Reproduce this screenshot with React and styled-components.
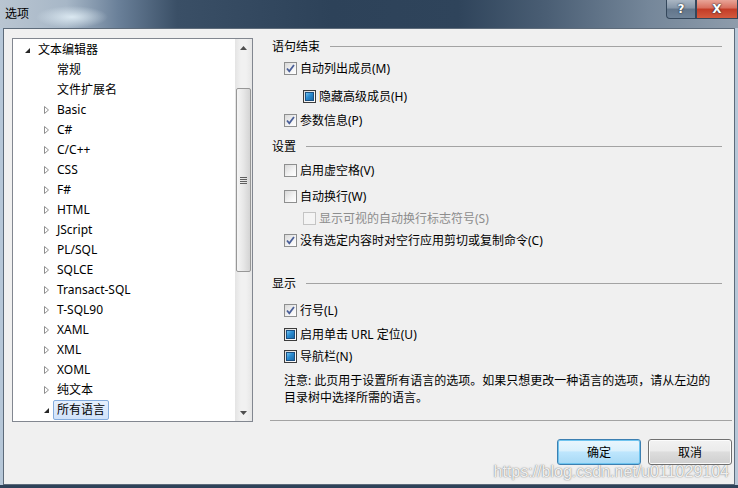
import React from "react";
import styled, { createGlobalStyle } from "styled-components";

const GlobalStyle = createGlobalStyle`
  html, body { margin: 0; padding: 0; background: #b6c7d8; }
  body {
    font-family: "Noto Sans", "Noto Sans CJK SC", sans-serif;
    font-size: 12px;
    color: #000;
  }
`;

const treeItems = [
  { label: "文本编辑器", level: 0, node: "open" },
  { label: "常规", level: 1 },
  { label: "文件扩展名", level: 1 },
  { label: "Basic", level: 1, node: "closed" },
  { label: "C#", level: 1, node: "closed" },
  { label: "C/C++", level: 1, node: "closed" },
  { label: "CSS", level: 1, node: "closed" },
  { label: "F#", level: 1, node: "closed" },
  { label: "HTML", level: 1, node: "closed" },
  { label: "JScript", level: 1, node: "closed" },
  { label: "PL/SQL", level: 1, node: "closed" },
  { label: "SQLCE", level: 1, node: "closed" },
  { label: "Transact-SQL", level: 1, node: "closed" },
  { label: "T-SQL90", level: 1, node: "closed" },
  { label: "XAML", level: 1, node: "closed" },
  { label: "XML", level: 1, node: "closed" },
  { label: "XOML", level: 1, node: "closed" },
  { label: "纯文本", level: 1, node: "closed" },
  { label: "所有语言", level: 1, node: "open", selected: true },
];

const Window = styled.div`
  position: relative;
  width: 738px;
  height: 488px;
  display: flex;
  flex-direction: column;
  overflow: hidden;
  background: #b6c7d8;
`;

const TitleBar = styled.div`
  flex: none;
  height: 28px;
  display: flex;
  align-items: flex-start;
  background:
    radial-gradient(ellipse 36px 11px at 72px 17px, rgba(225, 238, 246, 0.9), rgba(225, 238, 246, 0) 100%),
    linear-gradient(90deg, #b9c5d1 0%, #a7b7c7 9%, #6a8099 16%, #3a4f66 24%, #2d4259 45%, #2f445b 62%, #4a5e74 74%, #75879a 88%, #8e9cab 100%);
`;

const Title = styled.span`
  padding-left: 5px;
  line-height: 28px;
  font-size: 12px;
  color: #000;
`;

const Controls = styled.div`
  margin-left: auto;
  display: flex;
`;

const CapButton = styled.div`
  height: 18px;
  display: flex;
  align-items: center;
  justify-content: center;
  color: #fff;
  font-family: "DejaVu Sans", sans-serif;
  font-weight: bold;
  font-size: 12px;
  text-shadow: 0 0 2px #1d2a38, 0 0 1px #1d2a38;
  border: 1px solid #34475b;
  border-top: none;
  width: ${(p) => p.$w}px;
  background: ${(p) => p.$bg};
  border-bottom-left-radius: ${(p) => (p.$round ? 4 : 0)}px;
`;

const Frame = styled.div`
  flex: 1;
  display: flex;
  padding: 0 3px 0 3px;
  border-bottom: 3px solid #2e4259;
`;

const Body = styled.div`
  flex: 1;
  background: #f0f0f0;
  border: 1px solid #5d6b7a;
  display: grid;
  grid-template-columns: 241px 1fr;
  column-gap: 17px;
  align-items: start;
  padding: 9px 2px 0 8px;
`;

const Tree = styled.div`
  height: 384px;
  box-sizing: border-box;
  border: 1px solid #828790;
  background: #fff;
  display: flex;
`;

const TreeList = styled.div`
  flex: 1;
  display: flex;
  flex-direction: column;
  padding-top: 1px;
`;

const TreeRow = styled.div`
  height: 20px;
  display: flex;
  align-items: center;
  padding-left: ${(p) => 9 + p.$level * 19}px;
  white-space: nowrap;
`;

const Expander = styled.span`
  width: 12px;
  height: 12px;
  flex: none;
  margin-right: 4px;
  display: flex;
`;

const TreeLabel = styled.span`
  line-height: 16px;
  ${(p) =>
    p.$selected &&
    `
    margin-left: -4px;
    padding: 1px 3px;
    border: 1px solid #84acdd;
    border-radius: 2px;
    background: linear-gradient(180deg, #e6f0fd, #d0e2fa);
  `}
`;

const ScrollBar = styled.div`
  width: 17px;
  flex: none;
  display: flex;
  flex-direction: column;
  background: linear-gradient(90deg, #e4e4e4, #f1f1f1 35%, #f1f1f1 65%, #e6e6e6);
`;

const ArrowBox = styled.div`
  height: 17px;
  flex: none;
  display: flex;
  align-items: center;
  justify-content: center;
`;

const Track = styled.div`
  flex: 1;
  display: flex;
  flex-direction: column;
`;

const Thumb = styled.div`
  margin: 32px 1px 0 1px;
  height: 184px;
  box-sizing: border-box;
  border: 1px solid #979797;
  border-radius: 2px;
  background: linear-gradient(90deg, #f5f5f5, #e7e7e7 50%, #d4d4d4);
  display: flex;
  align-items: center;
  justify-content: center;
`;

const Grip = styled.div`
  width: 7px;
  height: 7px;
  background: repeating-linear-gradient(180deg, #5f5f5f 0 1px, transparent 1px 2px);
`;

const Options = styled.div`
  display: flex;
  flex-direction: column;
`;

const SectionHeader = styled.div`
  height: 16px;
  display: flex;
  align-items: center;
  gap: 10px;
  padding: 0 10px 0 2px;
  margin-top: ${(p) => p.$top || 0}px;

  &::after {
    content: "";
    flex: 1;
    height: 0;
    border-top: 1px solid #a3a3a3;
  }
`;

const CheckRow = styled.label`
  height: 16px;
  display: flex;
  align-items: center;
  gap: 3px;
  margin-top: ${(p) => p.$top}px;
  padding-left: ${(p) => 14 + (p.$indent ? 19 : 0)}px;
  color: ${(p) => (p.$disabled ? "#8d8d8d" : "#000")};
  white-space: nowrap;
`;

const Box = styled.span`
  width: 13px;
  height: 13px;
  flex: none;
  box-sizing: border-box;
  border: 1px solid ${(p) => (p.$disabled ? "#c4c4c4" : p.$mixed ? "#3c3c3c" : "#8e8f8f")};
  background: ${(p) =>
    p.$disabled
      ? "#f4f4f4"
      : "linear-gradient(135deg, #d8d8d8, #f4f4f4 60%, #ffffff)"};
  display: flex;
  align-items: center;
  justify-content: center;
`;

const MixedFill = styled.span`
  width: 9px;
  height: 9px;
  box-sizing: border-box;
  border: 1px solid #1b4f80;
  background: linear-gradient(135deg, #6fc2f0, #2a8bd0 45%, #1b6aa8);
`;

const Note = styled.p`
  margin: 8px 0 0 0;
  padding-left: 14px;
  line-height: 17px;
`;

const Separator = styled.div`
  margin-top: 14px;
  border-top: 1px solid #a3a3a3;
`;

const ButtonRow = styled.div`
  margin-top: 18px;
  display: flex;
  justify-content: flex-end;
  gap: 7px;
`;

const DialogButton = styled.button`
  width: 84px;
  height: 26px;
  padding: 0;
  font: inherit;
  color: #000;
  border-radius: 3px;
  border: 1px solid ${(p) => (p.$default ? "#3c7fb1" : "#707070")};
  background: ${(p) =>
    p.$default
      ? "linear-gradient(180deg, #eaf6fd 0%, #d9f0fc 45%, #bee6fd 50%, #a7d9f5 100%)"
      : "linear-gradient(180deg, #f2f2f2 0%, #ebebeb 45%, #dddddd 50%, #cfcfcf 100%)"};
  box-shadow: inset 0 0 0 1px ${(p) => (p.$default ? "#6ec4ef" : "#fcfcfc")};
`;

const Watermark = styled.div`
  position: absolute;
  right: 9px;
  bottom: 8px;
  line-height: 16px;
  font-family: "Liberation Sans", Arial, sans-serif;
  font-size: 16px;
  color: rgba(255, 255, 255, 0.9);
  text-shadow: 0 0 1px rgba(90, 90, 90, 0.8), 0 0 2px rgba(120, 120, 120, 0.5);
  pointer-events: none;
`;

const OpenArrow = () => (
  <svg width="12" height="12" viewBox="0 0 12 12">
    <polygon points="3,9 8,4 8,9" fill="#262626" />
  </svg>
);

const ClosedArrow = () => (
  <svg width="12" height="12" viewBox="0 0 12 12">
    <polygon points="3.5,2.5 7.5,6 3.5,9.5" fill="none" stroke="#8f8f8f" strokeWidth="1" />
  </svg>
);

const ScrollArrow = ({ down }) => (
  <svg width="7" height="4" viewBox="0 0 7 4">
    <polygon points={down ? "0,0 7,0 3.5,4" : "0,4 7,4 3.5,0"} fill="#4f4f4f" />
  </svg>
);

const Check = ({ state = "off", disabled }) => (
  <Box $disabled={disabled} $mixed={state === "mixed"}>
    {state === "on" && (
      <svg width="11" height="11" viewBox="0 0 11 11">
        <polyline points="2,5.5 4.3,8.3 9,2" fill="none" stroke="#4a5f98" strokeWidth="1.8" />
      </svg>
    )}
    {state === "mixed" && <MixedFill />}
  </Box>
);

const Option = ({ label, state, top, indent, disabled }) => (
  <CheckRow $top={top} $indent={indent} $disabled={disabled}>
    <Check state={state} disabled={disabled} />
    {label}
  </CheckRow>
);

export default function App() {
  return (
    <>
      <GlobalStyle />
      <Window>
        <TitleBar>
          <Title>选项</Title>
          <Controls>
            <CapButton
              $w={28}
              $round
              $bg="linear-gradient(180deg, #aab6c3 0%, #8596a8 45%, #62758a 50%, #6f8398 100%)"
            >
              ?
            </CapButton>
            <CapButton
              $w={40}
              $bg="linear-gradient(180deg, #e8a497 0%, #d86e5d 45%, #c33b26 50%, #d35a3e 100%)"
            >
              X
            </CapButton>
          </Controls>
        </TitleBar>

        <Frame>
          <Body>
            <Tree>
              <TreeList>
                {treeItems.map((item) => (
                  <TreeRow key={item.label} $level={item.level}>
                    <Expander>
                      {item.node === "open" && <OpenArrow />}
                      {item.node === "closed" && <ClosedArrow />}
                    </Expander>
                    <TreeLabel $selected={item.selected}>{item.label}</TreeLabel>
                  </TreeRow>
                ))}
              </TreeList>
              <ScrollBar>
                <ArrowBox>
                  <ScrollArrow />
                </ArrowBox>
                <Track>
                  <Thumb>
                    <Grip />
                  </Thumb>
                </Track>
                <ArrowBox>
                  <ScrollArrow down />
                </ArrowBox>
              </ScrollBar>
            </Tree>

            <Options>
              <SectionHeader>语句结束</SectionHeader>
              <Option top={6} state="on" label="自动列出成员(M)" />
              <Option top={12} indent state="mixed" label="隐藏高级成员(H)" />
              <Option top={8} state="on" label="参数信息(P)" />

              <SectionHeader $top={10}>设置</SectionHeader>
              <Option top={8} label="启用虚空格(V)" />
              <Option top={10} label="自动换行(W)" />
              <Option top={6} indent disabled label="显示可视的自动换行标志符号(S)" />
              <Option top={6} state="on" label="没有选定内容时对空行应用剪切或复制命令(C)" />

              <SectionHeader $top={27}>显示</SectionHeader>
              <Option top={11} state="on" label="行号(L)" />
              <Option top={8} state="mixed" label="启用单击 URL 定位(U)" />
              <Option top={6} state="mixed" label="导航栏(N)" />

              <Note>
                注意: 此页用于设置所有语言的选项。如果只想更改一种语言的选项，请从左边的
                <br />
                目录树中选择所需的语言。
              </Note>

              <Separator />
              <ButtonRow>
                <DialogButton $default>确定</DialogButton>
                <DialogButton>取消</DialogButton>
              </ButtonRow>
            </Options>
          </Body>
        </Frame>

        <Watermark>https://blog.csdn.net/u011029104</Watermark>
      </Window>
    </>
  );
}
